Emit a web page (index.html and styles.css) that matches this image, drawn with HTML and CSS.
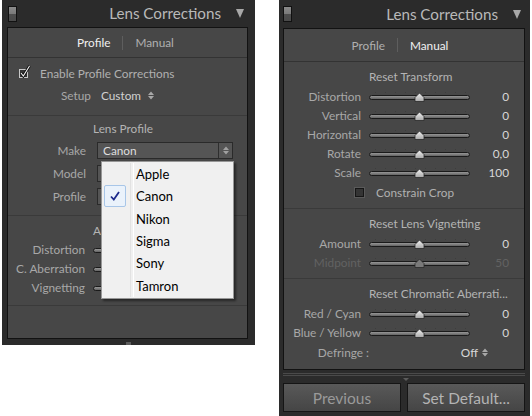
FILE: index.html
```html
<!DOCTYPE html>
<html>
<head>
<meta charset="utf-8">
<link rel="stylesheet" href="styles.css">
</head>
<body>
<div class="stage">
  <section class="panel panel-left">
    <header class="phead">
      <span class="switch"></span>
      <span class="ptitle">Lens Corrections</span>
      <span class="tri"></span>
    </header>
    <div class="pbody">
      <nav class="tabs"><span class="tab on">Profile</span><span class="bar"></span><span class="tab">Manual</span></nav>
      <div class="sec sec-enable">
        <div class="chk-row">
          <svg class="cbx" width="13" height="13" viewBox="0 0 13 13"><rect x="0.5" y="4.5" width="8" height="8" fill="#333333" stroke="#c8c8c8"/><path d="M2 8 L4.3 11 L10.5 1" fill="none" stroke="#0c0c0c" stroke-width="2.8"/><path d="M2 8 L4.3 11 L10.5 1" fill="none" stroke="#f2f2f2" stroke-width="1.1"/></svg>
          <span>Enable Profile Corrections</span>
        </div>
        <div class="setup-row"><span class="lbl">Setup</span><span class="val">Custom</span><svg class="ud" width="6" height="9" viewBox="0 0 6 9"><path d="M0 4 L3 0.5 L6 4 Z M0 5 L3 8.5 L6 5 Z" fill="#a8a8a8"/></svg></div>
      </div>
      <div class="sec sec-lens">
        <div class="sec-title">Lens Profile</div>
        <div class="frow"><span class="flbl">Make</span><div class="select"><span class="stext">Canon</span><span class="sarrow"><svg width="6" height="9" viewBox="0 0 6 9"><path d="M0 4 L3 0.5 L6 4 Z M0 5 L3 8.5 L6 5 Z" fill="#a0a0a0"/></svg></span></div></div>
        <div class="frow"><span class="flbl">Model</span><div class="select"><span class="stext"></span><span class="sarrow"></span></div></div>
        <div class="frow"><span class="flbl">Profile</span><div class="select"><span class="stext"></span><span class="sarrow"></span></div></div>
      </div>
      <div class="sec sec-amount">
        <div class="sec-title">Amount</div>
        <div class="srow"><span class="slbl">Distortion</span><svg class="trk" width="101" height="11" viewBox="0 0 101 11"><use href="#tr"/></svg><span class="sval">100</span></div>
        <div class="srow"><span class="slbl">C. Aberration</span><svg class="trk" width="101" height="11" viewBox="0 0 101 11"><use href="#tr"/></svg><span class="sval">100</span></div>
        <div class="srow"><span class="slbl">Vignetting</span><svg class="trk" width="101" height="11" viewBox="0 0 101 11"><use href="#tr"/></svg><span class="sval">100</span></div>
      </div>
    </div>
    <div class="foot-mark"></div>
    <div class="dropdown">
      <div class="dd-item"><span class="dd-chk"></span><span class="dd-txt">Apple</span></div>
      <div class="dd-item sel"><span class="dd-chk"><svg width="12" height="12" viewBox="0 0 12 12"><path d="M2 6.5 L4.8 9.5 L10 2" fill="none" stroke="#1c2a8c" stroke-width="1.8"/></svg></span><span class="dd-txt">Canon</span></div>
      <div class="dd-item"><span class="dd-chk"></span><span class="dd-txt">Nikon</span></div>
      <div class="dd-item"><span class="dd-chk"></span><span class="dd-txt">Sigma</span></div>
      <div class="dd-item"><span class="dd-chk"></span><span class="dd-txt">Sony</span></div>
      <div class="dd-item"><span class="dd-chk"></span><span class="dd-txt">Tamron</span></div>
    </div>
  </section>

  <section class="panel panel-right">
    <header class="phead">
      <span class="switch"></span>
      <span class="ptitle">Lens Corrections</span>
      <span class="tri"></span>
    </header>
    <div class="pbody">
      <nav class="tabs tall"><span class="tab">Profile</span><span class="bar"></span><span class="tab on">Manual</span></nav>
      <div class="sec sec-t">
        <div class="sec-title">Reset Transform</div>
        <div class="srow"><span class="slbl">Distortion</span><svg class="trk" width="101" height="11" viewBox="0 0 101 11"><use href="#tr"/></svg><span class="sval">0</span></div>
        <div class="srow"><span class="slbl">Vertical</span><svg class="trk" width="101" height="11" viewBox="0 0 101 11"><use href="#tr"/></svg><span class="sval">0</span></div>
        <div class="srow"><span class="slbl">Horizontal</span><svg class="trk" width="101" height="11" viewBox="0 0 101 11"><use href="#tr"/></svg><span class="sval">0</span></div>
        <div class="srow"><span class="slbl">Rotate</span><svg class="trk" width="101" height="11" viewBox="0 0 101 11"><use href="#tr"/></svg><span class="sval">0,0</span></div>
        <div class="srow"><span class="slbl">Scale</span><svg class="trk" width="101" height="11" viewBox="0 0 101 11"><use href="#tr"/></svg><span class="sval">100</span></div>
        <div class="crop-row"><span class="cb-empty"></span><span>Constrain Crop</span></div>
      </div>
      <div class="sec sec-v">
        <div class="sec-title">Reset Lens Vignetting</div>
        <div class="srow"><span class="slbl">Amount</span><svg class="trk" width="101" height="11" viewBox="0 0 101 11"><use href="#tr"/></svg><span class="sval">0</span></div>
        <div class="srow dim"><span class="slbl">Midpoint</span><svg class="trk" width="101" height="11" viewBox="0 0 101 11"><use href="#trd"/></svg><span class="sval">50</span></div>
      </div>
      <div class="sec sec-c">
        <div class="sec-title">Reset Chromatic Aberrati...</div>
        <div class="srow"><span class="slbl">Red / Cyan</span><svg class="trk" width="101" height="11" viewBox="0 0 101 11"><use href="#tr"/></svg><span class="sval">0</span></div>
        <div class="srow"><span class="slbl">Blue / Yellow</span><svg class="trk" width="101" height="11" viewBox="0 0 101 11"><use href="#tr"/></svg><span class="sval">0</span></div>
        <div class="def-row"><span class="slbl">Defringe :</span><span class="def-val">Off<svg class="ud" width="6" height="9" viewBox="0 0 6 9"><path d="M0 4 L3 0.5 L6 4 Z M0 5 L3 8.5 L6 5 Z" fill="#a8a8a8"/></svg></span></div>
      </div>
    </div>
    <div class="pfoot">
      <div class="dbl"></div>
      <div class="foot-tri"></div>
    </div>
    <div class="btns">
      <button class="btn dimtxt">Previous</button>
      <button class="btn">Set Default...</button>
    </div>
  </section>
</div>

<svg width="0" height="0" class="defs">
  <defs>
    <linearGradient id="thg" x1="0" y1="0" x2="0" y2="1"><stop offset="0" stop-color="#f4f4f4"/><stop offset="1" stop-color="#a8a8a8"/></linearGradient>
    <linearGradient id="tkg" x1="0" y1="0" x2="0" y2="1"><stop offset="0" stop-color="#a0a0a0"/><stop offset="1" stop-color="#5a5a5a"/></linearGradient>
    <g id="ticks" fill="#3d3d3d">
      <rect x="6" y="1" width="1" height="1"/><rect x="16" y="1" width="1" height="1"/><rect x="26" y="1" width="1" height="1"/><rect x="36" y="1" width="1" height="1"/><rect x="46" y="1" width="1" height="1"/><rect x="56" y="1" width="1" height="1"/><rect x="66" y="1" width="1" height="1"/><rect x="76" y="1" width="1" height="1"/><rect x="86" y="1" width="1" height="1"/><rect x="96" y="1" width="1" height="1"/>
    </g>
    <g id="tr">
      <use href="#ticks"/>
      <rect x="0.5" y="4.5" width="100" height="4" rx="2" fill="url(#tkg)" stroke="#1a1a1a"/>
      <path d="M46 10.5 L46 6.5 L50.5 2 L55 6.5 L55 10.5 Z" fill="url(#thg)" stroke="#2a2a2a" stroke-width="0.8"/>
    </g>
    <g id="trd">
      <use href="#ticks"/>
      <rect x="0.5" y="4.5" width="100" height="4" rx="2" fill="url(#tkg)" stroke="#1a1a1a"/>
      <path d="M46 10.5 L46 6.5 L50.5 2 L55 6.5 L55 10.5 Z" fill="#7a7a7a" stroke="#2a2a2a" stroke-width="0.8"/>
    </g>
  </defs>
</svg>
</body>
</html>
```

FILE: styles.css
```css
* { box-sizing: border-box; }
html, body { margin: 0; padding: 0; background: #ffffff; }
body { font-family: Lato, "Open Sans", sans-serif; font-size: 11.8px; }
.defs { position: absolute; width: 0; height: 0; }

.stage { display: flex; align-items: flex-start; }

.panel {
  position: relative;
  background: #2b2b2b;
  display: flex;
  flex-direction: column;
}
.panel-left { width: 253px; height: 345px; margin-left: 2px; padding: 0 7px 6px 5px; }
.panel-right { width: 251px; height: 416px; margin-left: 24px; padding: 0 5px 4px 4px; }

.phead { height: 27px; display: flex; align-items: center; flex: none; }
.panel-right .phead { height: 28px; }
.switch {
  width: 9px; height: 16px; margin-left: 1px;
  border: 1px solid #111;
  background: linear-gradient(#8a8a8a 0, #7a7a7a 50%, #4e4e4e 50%, #4a4a4a 100%);
}
.panel-right .switch { margin-left: 0; }
.ptitle { margin-left: auto; margin-top: -1px; font-size: 15.2px; color: #b9b9b9; }
.tri {
  width: 0; height: 0; margin: 0 4px 0 15px;
  border-left: 4.5px solid transparent; border-right: 4.5px solid transparent;
  border-top: 9px solid #a8a8a8;
}

.pbody {
  flex: 1;
  border: 1px solid #121212;
  background: #474747;
  display: flex; flex-direction: column;
}

.tabs {
  height: 30px; flex: none;
  display: flex; align-items: center; justify-content: center;
  border-bottom: 1px solid #333333;
  color: #b0b0b0;
  padding-right: 4px;
}
.tabs.tall { height: 33px; padding-right: 8px; }
.tab.on { color: #f0f0f0; }
.bar { width: 1px; height: 14px; background: #5e5e5e; margin: 0 12px; }

.sec { border-bottom: 1px solid #3a3a3a; display: flex; flex-direction: column; }
.sec-title { height: 20px; line-height: 20px; padding-left: 85px; color: #b4b4b4; white-space: nowrap; }

/* left panel sections */
.sec-enable { padding: 5px 0 9px; }
.chk-row { height: 20px; display: flex; align-items: center; padding-left: 11px; color: #b0b0b0; }
.cbx { margin-right: 8px; margin-top: -4px; }
.setup-row { height: 22px; margin-top: 1px; display: flex; align-items: center; padding-left: 53px; color: #a8a8a8; }
.setup-row .val { margin-left: 10px; color: #d0d0d0; }
.ud { margin-left: 7px; }

.sec-lens { padding: 3px 0 9px; gap: 3px; }
.sec-lens .sec-title { margin-bottom: -2px; }
.frow { height: 20px; display: flex; align-items: center; }
.flbl { width: 78px; text-align: right; color: #a8a8a8; }
.select {
  margin-left: 11px; width: 136px; height: 17px;
  background: #555555; border: 1px solid #2a2a2a;
  display: flex; align-items: center;
}
.stext { flex: 1; padding-left: 5px; color: #dedede; }
.sarrow { width: 14px; height: 100%; border-left: 1px solid #2e2e2e; display: flex; align-items: center; justify-content: center; }

.sec-amount { padding: 5px 0 8px; flex: none; }
.sec-amount .sec-title { height: 19px; line-height: 19px; }

.srow { height: 19px; display: flex; align-items: center; }
.slbl { width: 77px; text-align: right; color: #a8a8a8; white-space: nowrap; }
.trk { margin-left: 8px; flex: none; }
.sval { width: 39px; text-align: right; color: #d8d8d8; }
.srow.dim .slbl, .srow.dim .sval { color: #626262; }

/* right panel */
.sec-t { padding: 5px 0 6px; }
.sec-v { padding: 5px 0 6px; }
.sec-c { padding: 5px 0 6px; border-bottom: none; flex: 1; }
.crop-row { height: 20px; display: flex; align-items: center; padding-left: 71px; color: #b0b0b0; }
.cb-empty { width: 9px; height: 9px; background: #343434; border: 1px solid #161616; box-shadow: 0 0 0 1px #5a5a5a; margin-right: 12px; }
.def-row { height: 20px; display: flex; align-items: center; }
.def-row .slbl { width: 85px; }
.def-val { margin-left: auto; margin-right: 36px; color: #d8d8d8; display: flex; align-items: center; }
.def-val .ud { margin-left: 4px; }

.pfoot { height: 13px; position: relative; flex: none; }
.dbl { margin-top: 3px; height: 3px; border-top: 1px solid #4a4a4a; border-bottom: 1px solid #4a4a4a; }
.foot-tri {
  position: absolute; left: 120px; top: 8px;
  width: 0; height: 0;
  border-left: 3px solid transparent; border-right: 3px solid transparent;
  border-top: 3px solid #5c5c5c;
}
.btns { display: flex; gap: 6px; height: 29px; flex: none; }
.btn {
  flex: 1; height: 29px;
  border: 1px solid #151515;
  background: linear-gradient(#595959, #454545);
  color: #b4b4b4;
  font-family: Lato, "Open Sans", sans-serif;
  font-size: 15.5px;
  padding: 0;
}
.btn.dimtxt { color: #9a9a9a; }

.foot-mark {
  position: absolute; left: 124px; bottom: 0;
  width: 5px; height: 3px; background: #5c5c5c;
}

/* dropdown menu */
.dropdown {
  position: absolute; left: 99px; top: 161px;
  width: 133px;
  background: #f0f0f0;
  border: 1px solid #979797;
  box-shadow: 2px 2px 2px rgba(0,0,0,0.45);
  padding: 1px 0;
  font-family: Lato, "Open Sans", sans-serif;
  font-size: 13px;
  color: #000;
}
.dropdown::before {
  content: ""; position: absolute; left: 28px; top: 1px; bottom: 1px;
  width: 2px; border-left: 1px solid #e2e2e2; border-right: 1px solid #ffffff;
}
.dd-item { height: 22.3px; display: flex; align-items: center; position: relative; }
.dd-chk { width: 22px; height: 22px; margin-left: 2px; display: flex; align-items: center; justify-content: center; }
.dd-item.sel .dd-chk { border: 1px solid #a8c6e8; border-radius: 2px; background: #eaf2fb; }
.dd-txt { margin-left: 10px; }
```
